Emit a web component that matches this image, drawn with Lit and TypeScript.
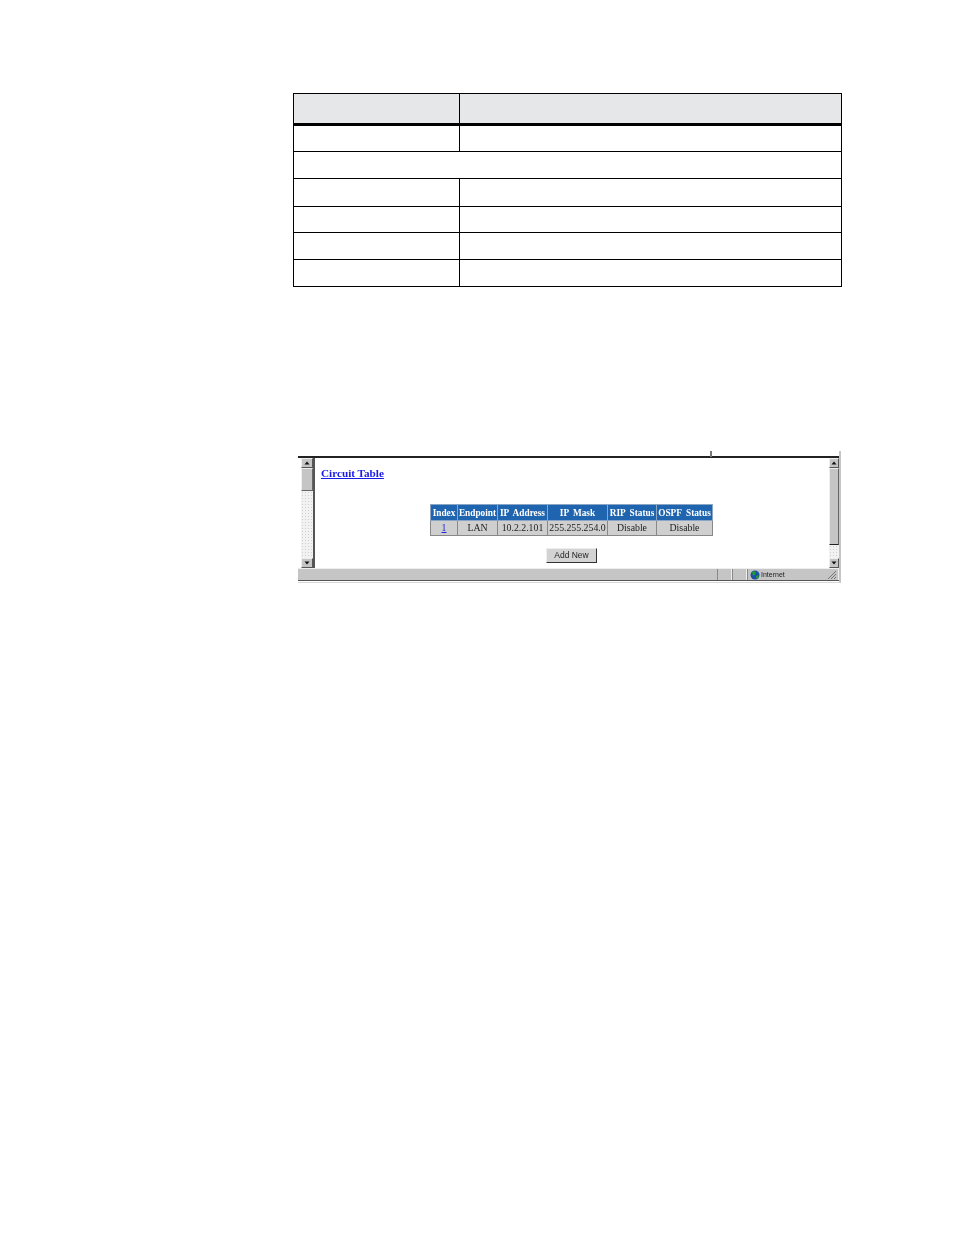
import { LitElement, html, css } from "lit";
import { customElement } from "lit/decorators.js";

@customElement("app-root")
export class AppRoot extends LitElement {
  static styles = css`
    :host { display: block; width: 954px; height: 1235px; background: #fff; overflow: hidden; font-family: "Liberation Serif", serif; }
    .page { padding: 93px 0 0 293px; }
    .spec { width: 549px; border-collapse: collapse; table-layout: fixed; box-sizing: border-box; }
    .spec td { border: 1px solid #000; padding: 0; box-sizing: border-box; }
    .spec .c1 { width: 166px; }
    .spec .head td { background: #e6e7e8; height: 31px; border-bottom: 3px solid #000; }
    .r1 td { height: 27px; }
    .r2 td { height: 27px; }
    .r3 td { height: 28px; }
    .r4 td { height: 26px; }
    .r5 td { height: 27px; }
    .r6 td { height: 27px; }

    .shot { position: relative; margin: 164px 0 0 5px; width: 543px; height: 132px; box-sizing: border-box; border-right: 2px solid #c6c5c6; border-bottom: 1px solid #d8d8d8; display: flex; flex-direction: column; filter: blur(0.3px); }
    .tick { position: absolute; left: 412px; top: 0; width: 2px; height: 6px; background: #777; }
    .view { margin-top: 5px; height: 112px; border-top: 2px solid #222; display: flex; box-sizing: border-box; }
    .sb { width: 12px; display: flex; flex-direction: column; box-sizing: border-box;
      background-color: #f2f2f2;
      background-image: radial-gradient(#cfcfcf 0.9px, transparent 1px);
      background-size: 3px 3px; }
    .sb.left { margin-left: 3px; }
    .sb.right { width: 10px; }
    .arrow { height: 10px; flex: none; background: #c6c5c6; border: 1px solid; border-color: #eee #555 #555 #eee; box-sizing: border-box; display: flex; align-items: center; justify-content: center; }
    .arrow svg { display: block; }
    .thumb { flex: none; background: #c6c5c6; border: 1px solid; border-color: #eee #666 #666 #eee; box-sizing: border-box; }
    .left .thumb { height: 23px; }
    .right .thumb { height: 77px; border-bottom: 1px solid #222; }
    .fill { flex: 1; }
    .divider { width: 2px; background: #555; flex: none; }
    .content { flex: 1; background: #fff; padding: 9px 0 0 6px; display: flex; flex-direction: column; }
    .title { font-size: 11.2px; font-weight: bold; color: #1a1ae6; text-decoration: underline; line-height: 13px; }
    .data { margin: 24px 0 0 109px; border-collapse: collapse; table-layout: fixed; width: 282px; font-size: 9.8px; text-align: center; }
    .data th { background: #1f64ae; color: #fff; height: 15px; padding: 0; font-weight: bold; border: 1px solid #8aa6c4; white-space: nowrap; font-size: 9.3px; line-height: 14px; word-spacing: 2px; }
    .data td { background: #cfcfcf; color: #222; height: 14px; padding: 0; border: 1px solid #888; white-space: nowrap; line-height: 12px; }
    .data a { color: #2222dd; text-decoration: underline; }
    .btn { align-self: flex-start; margin: 12px 0 0 225px; width: 51px; height: 15px; box-sizing: border-box; background: #d4d3d4; border: 1px solid; border-color: #eee #333 #333 #eee; font: 8.5px "Liberation Sans", sans-serif; color: #222; text-align: center; line-height: 13px; padding: 0; }
    .status { height: 13px; background: #c6c5c6; border-top: 1px solid #eee; border-bottom: 1px solid #555; box-sizing: border-box; display: flex; font: 7px "Liberation Sans", sans-serif; color: #222; }
    .gap { width: 419px; }
    .cell { border-left: 1px solid #888; border-right: 1px solid #eee; box-sizing: border-box; }
    .c-a { width: 15px; }
    .c-b { width: 15px; }
    .c-i { flex: 1; display: flex; align-items: center; gap: 1px; padding-left: 2px; line-height: 11px; position: relative; }
    .grip { position: absolute; right: 1px; bottom: 0; }
  `;

  render() {
    const up = html`<svg width="6" height="4" viewBox="0 0 6 4"><path d="M3 0.5 L5.5 3.5 H0.5 Z" fill="#111"/></svg>`;
    const down = html`<svg width="6" height="4" viewBox="0 0 6 4"><path d="M3 3.5 L5.5 0.5 H0.5 Z" fill="#111"/></svg>`;
    return html`<div class="page">
      <table class="spec">
        <tr class="head"><td class="c1"></td><td></td></tr>
        <tr class="r1"><td></td><td></td></tr>
        <tr class="r2"><td colspan="2"></td></tr>
        <tr class="r3"><td></td><td></td></tr>
        <tr class="r4"><td></td><td></td></tr>
        <tr class="r5"><td></td><td></td></tr>
        <tr class="r6"><td></td><td></td></tr>
      </table>
      <div class="shot">
        <div class="tick"></div>
        <div class="view">
          <div class="sb left">
            <div class="arrow">${up}</div>
            <div class="thumb"></div>
            <div class="fill"></div>
            <div class="arrow">${down}</div>
          </div>
          <div class="divider"></div>
          <div class="content">
            <div class="title">Circuit Table</div>
            <table class="data">
              <colgroup><col style="width:27px"/><col style="width:40px"/><col style="width:50px"/><col style="width:60px"/><col style="width:49px"/><col style="width:56px"/></colgroup>
              <tr><th>Index</th><th>Endpoint</th><th>IP Address</th><th>IP Mask</th><th>RIP Status</th><th>OSPF Status</th></tr>
              <tr><td><a>1</a></td><td>LAN</td><td>10.2.2.101</td><td>255.255.254.0</td><td>Disable</td><td>Disable</td></tr>
            </table>
            <button class="btn">Add New</button>
          </div>
          <div class="sb right">
            <div class="arrow">${up}</div>
            <div class="thumb"></div>
            <div class="fill"></div>
            <div class="arrow">${down}</div>
          </div>
        </div>
        <div class="status">
          <div class="gap"></div>
          <div class="cell c-a"></div>
          <div class="cell c-b"></div>
          <div class="cell c-i">
            <svg width="10" height="10" viewBox="0 0 10 10"><circle cx="5" cy="5" r="4.5" fill="#1d4fa8"/><path d="M2 2 L5 1 L6 4 L3 6 Z M6 6 L9 5 L8 9 L6 8 Z" fill="#1f9a2c"/></svg>
            <span>Internet</span>
            <svg class="grip" width="10" height="10" viewBox="0 0 10 10"><path d="M9 1 L1 9 M9 4 L4 9 M9 7 L7 9" stroke="#777" stroke-width="1"/></svg>
          </div>
        </div>
      </div>
    </div>`;
  }
}
